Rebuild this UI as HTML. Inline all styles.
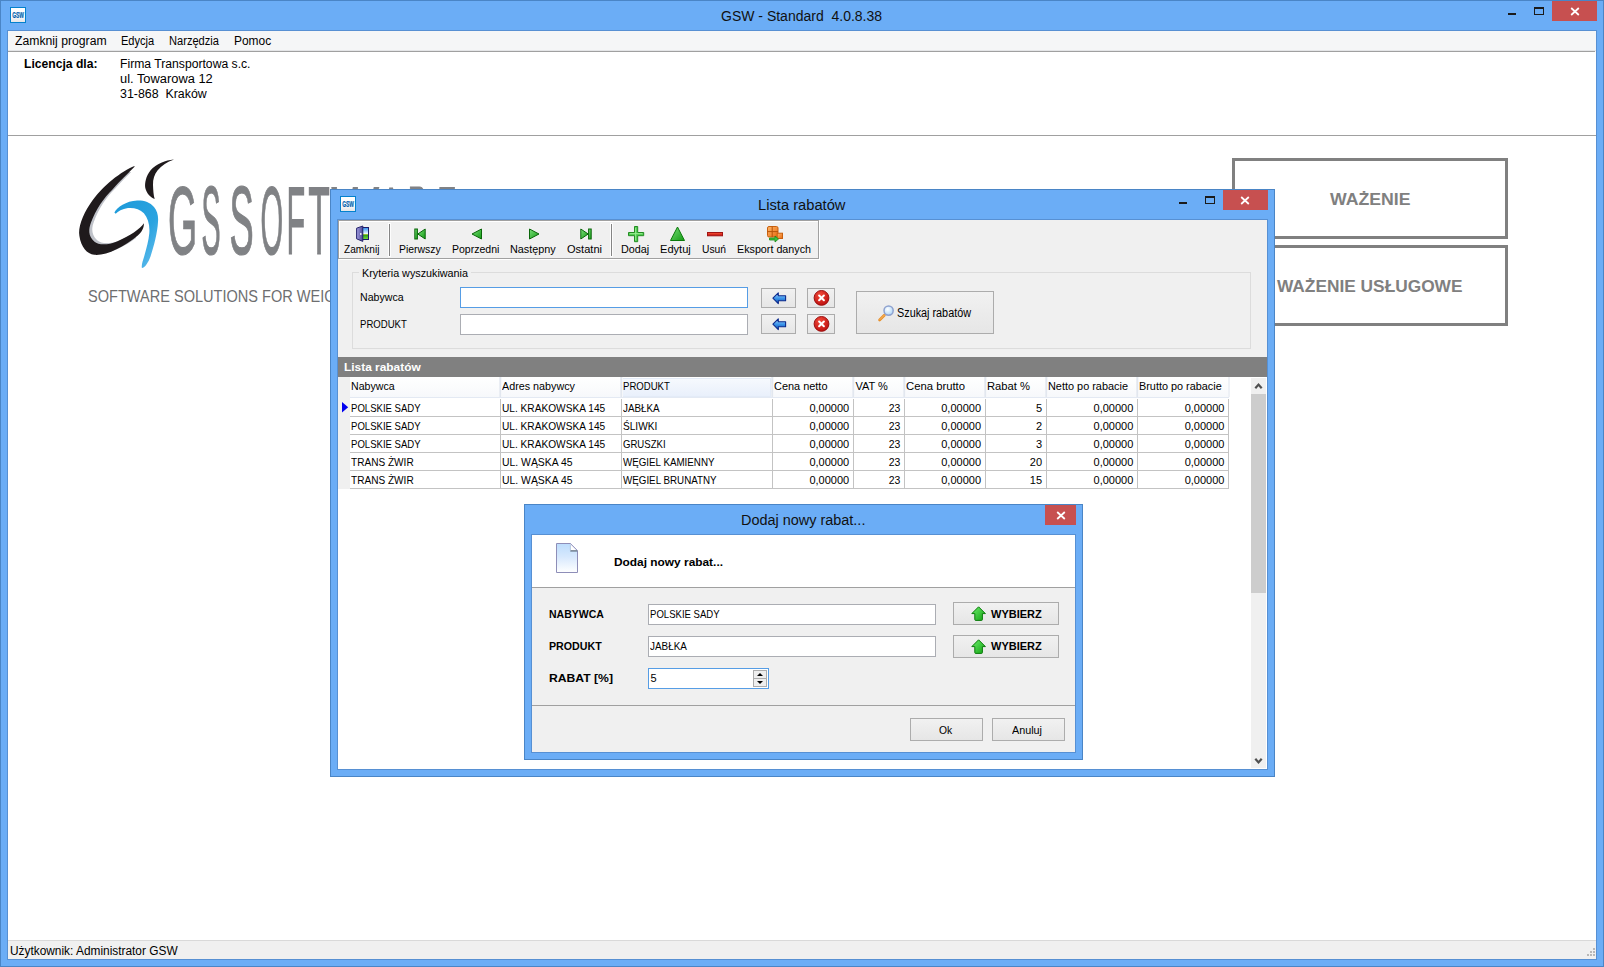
<!DOCTYPE html>
<html lang="pl">
<head>
<meta charset="utf-8">
<title>GSW - Standard 4.0.8.38</title>
<style>
*{box-sizing:border-box;margin:0;padding:0}
html,body{width:1604px;height:967px;overflow:hidden;background:#6badf6}
body{position:relative;font-family:"Liberation Sans",sans-serif;font-size:11px;line-height:11px;color:#000}
.abs{position:absolute;display:block}
.t{position:absolute;white-space:nowrap;transform-origin:0 50%}
svg{overflow:visible}
</style>
</head>
<body>
<div class="abs" style="left:0px;top:0px;width:1604px;height:967px;background:#6badf6;border:1px solid #4a85c6"></div>
<div class="abs" style="left:7px;top:30px;width:1590px;height:930px;background:#5790d3"></div>
<svg class="abs" style="left:10px;top:7px" width="16" height="16" viewBox="0 0 16 16"><defs><linearGradient id="gi10" x1="0" y1="0" x2="0" y2="1"><stop offset="0" stop-color="#ffffff"/><stop offset="0.55" stop-color="#fbfbfb"/><stop offset="1" stop-color="#e4e4e6"/></linearGradient></defs><rect x="0.5" y="0.5" width="15" height="15" fill="url(#gi10)" stroke="#0481cd"/><text x="2.2" y="11" font-family="Liberation Sans, sans-serif" font-weight="bold" font-size="8.4" fill="#005fae" stroke="#005fae" stroke-width="0.2" textLength="11.8" lengthAdjust="spacingAndGlyphs">GSW</text></svg>
<span class="t" style="left:721px;top:9px;font-size:14px;line-height:14px;color:#111">GSW - Standard&nbsp; 4.0.8.38</span>
<div class="abs" style="left:1552px;top:1px;width:45px;height:20px;background:#c75050"></div>
<svg class="abs" style="left:1570px;top:7px" width="10" height="9" viewBox="0 0 10 9"><path d="M1.2 1 L8.8 8 M8.8 1 L1.2 8" stroke="#fff" stroke-width="1.7" fill="none"/></svg>
<div class="abs" style="left:1534px;top:7px;width:10px;height:8px;border:1px solid #1b1b1b;border-top-width:2px"></div>
<div class="abs" style="left:1508px;top:13px;width:8px;height:2px;background:#1b1b1b"></div>
<div class="abs" style="left:8px;top:31px;width:1588px;height:21px;background:#f5f6f7"></div>
<div class="abs" style="left:8px;top:50px;width:1588px;height:1px;background:#e4e5e7"></div>
<div class="abs" style="left:8px;top:51px;width:1587px;height:1px;background:#a0a0a0"></div>
<span class="t" style="left:14.5px;top:35px;font-size:12px;line-height:12px;transform:scaleX(1.0174)">Zamknij program</span>
<span class="t" style="left:121px;top:35px;font-size:12px;line-height:12px;transform:scaleX(0.9214)">Edycja</span>
<span class="t" style="left:169px;top:35px;font-size:12px;line-height:12px;transform:scaleX(0.9254)">Narzędzia</span>
<span class="t" style="left:234px;top:35px;font-size:12px;line-height:12px;transform:scaleX(0.9957)">Pomoc</span>
<div class="abs" style="left:8px;top:52px;width:1588px;height:888px;background:#fff"></div>
<div class="abs" style="left:8px;top:135px;width:1588px;height:1px;background:#a0a0a0"></div>
<span class="t" style="left:24px;top:57px;font-size:13px;line-height:13px;font-weight:bold;transform:scaleX(0.9333)">Licencja dla:</span>
<span class="t" style="left:119.5px;top:58px;font-size:12px;line-height:12px;transform:scaleX(1.0140)">Firma Transportowa s.c.</span>
<span class="t" style="left:119.5px;top:73px;font-size:12px;line-height:12px;transform:scaleX(1.0717)">ul. Towarowa 12</span>
<span class="t" style="left:119.5px;top:88px;font-size:12px;line-height:12px;transform:scaleX(1.0316)">31-868&nbsp; Kraków</span>
<svg class="abs" style="left:70px;top:150px" width="120" height="130" viewBox="0 0 120 130"><defs><linearGradient id="lgb" x1="0" y1="0" x2="1" y2="1"><stop offset="0" stop-color="#1d9ad9"/><stop offset="0.6" stop-color="#2aa3e0"/><stop offset="1" stop-color="#6cc1ee"/></linearGradient></defs><clipPath id="lcp"><rect x="0" y="22" width="66" height="80"/></clipPath><g clip-path="url(#lcp)"><path d="M64.5 16.1 C52 21, 32 36, 20.2 53.8 C12 66, 8 78, 9.4 86 C11 97, 17 104, 24.2 104.8 C36 106, 54 97, 67.2 86 C72 82, 74 78, 73.9 73.3 C70 79, 60 86, 47 91.4 C38 95, 29 95.5, 24.2 91.4 C18 86, 18.5 79, 21 72.6 C25.5 60, 34 47.5, 42.5 39.5 C50 31, 59 22.5, 64.5 16.8 Z" fill="#bfc2c9" transform="translate(3,-1.2)"/></g><path d="M64.5 16.1 C52 21, 32 36, 20.2 53.8 C12 66, 8 78, 9.4 86 C11 97, 17 104, 24.2 104.8 C36 106, 54 97, 67.2 86 C72 82, 74 78, 73.9 73.3 C70 79, 60 86, 47 91.4 C38 95, 29 95.5, 24.2 91.4 C18 86, 18.5 79, 21 72.6 C25.5 60, 34 47.5, 42.5 39.5 C50 31, 59 22.5, 64.5 16.8 Z" fill="#1f1a1c"/><path d="M103.5 9.4 C96 10, 86 14, 80.6 20.2 C76 26, 74.5 33, 75.3 38 C76.5 43, 80 47, 84.7 49.1 C83.5 45.5, 83.2 40, 83 35 C82.8 29, 84.5 24.5, 87.5 20.5 C91.5 15.5, 97.5 11.8, 103.5 9.7 Z" fill="#1f1a1c"/><path d="M44.4 62.5 C47 57, 56 51, 67.2 50.4 C74 50.2, 80 52, 84 57 C87.5 61.5, 88.5 66, 88 72 C87.5 82, 84 96, 80.6 106.2 C78 113, 75 117.5, 71.9 118 C71.5 116, 72 114, 72.6 111.6 C75 104, 78.5 92, 79.3 83.3 C80 75, 78 68, 73.9 63.2 C70 59, 64 57.5, 58 58 C52 58.8, 48 61.5, 45.7 63.8 Z" fill="url(#lgb)"/></svg>
<svg class="abs" style="left:160px;top:180px" width="320" height="85" viewBox="0 0 320 85"><text y="74.4" font-family="Liberation Sans, sans-serif" font-size="97" lengthAdjust="spacingAndGlyphs" fill="#808285" stroke="#808285" stroke-width="1.2" xml:space="preserve"><tspan lengthAdjust="spacingAndGlyphs" x="8.1" textLength="29.2">G</tspan><tspan lengthAdjust="spacingAndGlyphs" x="41.5" textLength="19.1">S</tspan><tspan x="62"> </tspan><tspan lengthAdjust="spacingAndGlyphs" x="69.4" textLength="24.2">S</tspan><tspan lengthAdjust="spacingAndGlyphs" x="100.4" textLength="22.7">O</tspan><tspan lengthAdjust="spacingAndGlyphs" x="126.5" textLength="18.7">F</tspan><tspan lengthAdjust="spacingAndGlyphs" x="148.2" textLength="21.6">T</tspan><tspan lengthAdjust="spacingAndGlyphs" x="171.6" textLength="47.6">W</tspan><tspan lengthAdjust="spacingAndGlyphs" x="219.9" textLength="22.1">A</tspan><tspan lengthAdjust="spacingAndGlyphs" x="247.7" textLength="20.7">R</tspan><tspan lengthAdjust="spacingAndGlyphs" x="277.3" textLength="19.3">E</tspan></text></svg>
<span class="t" style="left:87.5px;top:288px;font-size:16.5px;line-height:16.5px;color:#6d6e70;transform:scaleX(0.8819)">SOFTWARE SOLUTIONS FOR WEIGHING</span>
<div class="abs" style="left:1232px;top:158px;width:276px;height:81px;border:3px solid #808080;background:#fff"></div>
<div class="abs" style="left:1232px;top:245px;width:276px;height:81px;border:3px solid #808080;background:#fff"></div>
<span class="t" style="left:1330px;top:191px;font-size:16px;line-height:16px;font-weight:bold;color:#808080;transform:translateY(0.5px) scaleX(1.1044)">WAŻENIE</span>
<span class="t" style="left:1277px;top:278px;font-size:16px;line-height:16px;font-weight:bold;color:#808080;transform:translateY(0.5px) scaleX(1.0812)">WAŻENIE USŁUGOWE</span>
<div class="abs" style="left:8px;top:940px;width:1588px;height:1px;background:#d9d9d9"></div>
<div class="abs" style="left:8px;top:941px;width:1588px;height:18px;background:#f0f0f0"></div>
<span class="t" style="left:9.5px;top:945px;font-size:12px;line-height:12px;transform:scaleX(0.9895)">Użytkownik: Administrator GSW</span>
<svg class="abs" style="left:1584px;top:947px" width="12" height="12" viewBox="0 0 12 12"><rect x="9" y="1" width="2" height="2" fill="#b8b8b8"/><rect x="6" y="4" width="2" height="2" fill="#b8b8b8"/><rect x="9" y="4" width="2" height="2" fill="#b8b8b8"/><rect x="3" y="7" width="2" height="2" fill="#b8b8b8"/><rect x="6" y="7" width="2" height="2" fill="#b8b8b8"/><rect x="9" y="7" width="2" height="2" fill="#b8b8b8"/></svg>
<div class="abs" style="left:330px;top:189px;width:945px;height:588px;background:#6badf6;border:1px solid #4a85c6"></div>
<div class="abs" style="left:337px;top:219px;width:931px;height:551px;background:#5790d3"></div>
<svg class="abs" style="left:340px;top:196px" width="16" height="16" viewBox="0 0 16 16"><defs><linearGradient id="gi340" x1="0" y1="0" x2="0" y2="1"><stop offset="0" stop-color="#ffffff"/><stop offset="0.55" stop-color="#fbfbfb"/><stop offset="1" stop-color="#e4e4e6"/></linearGradient></defs><rect x="0.5" y="0.5" width="15" height="15" fill="url(#gi340)" stroke="#0481cd"/><text x="2.2" y="11" font-family="Liberation Sans, sans-serif" font-weight="bold" font-size="8.4" fill="#005fae" stroke="#005fae" stroke-width="0.2" textLength="11.8" lengthAdjust="spacingAndGlyphs">GSW</text></svg>
<span class="t" style="left:758px;top:198px;font-size:14px;line-height:14px;color:#111;transform:scaleX(1.0507)">Lista rabatów</span>
<div class="abs" style="left:1223px;top:190px;width:45px;height:20px;background:#c75050"></div>
<svg class="abs" style="left:1240px;top:196px" width="10" height="9" viewBox="0 0 10 9"><path d="M1.2 1 L8.8 8 M8.8 1 L1.2 8" stroke="#fff" stroke-width="1.7" fill="none"/></svg>
<div class="abs" style="left:1205px;top:196px;width:10px;height:8px;border:1px solid #1b1b1b;border-top-width:2px"></div>
<div class="abs" style="left:1179px;top:202px;width:8px;height:2px;background:#1b1b1b"></div>
<div class="abs" style="left:338px;top:220px;width:929px;height:549px;background:#f0f0f0"></div>
<div class="abs" style="left:338px;top:220px;width:481px;height:39px;background:#f0f0f0;border:1px solid #a0a0a0;box-shadow:inset 1px 1px 0 #fff,1px 1px 0 #fff"></div>
<div class="abs" style="left:389px;top:224px;width:1px;height:32px;background:#858585;box-shadow:0 0 0 1px rgba(255,255,255,.85)"></div>
<div class="abs" style="left:611px;top:224px;width:1px;height:32px;background:#858585;box-shadow:0 0 0 1px rgba(255,255,255,.85)"></div>
<svg class="abs" style="left:356px;top:225px" width="14" height="18" viewBox="0 0 14 18"><defs><linearGradient id="sky" x1="0" y1="0" x2="0" y2="1"><stop offset="0" stop-color="#2a8cf0"/><stop offset="0.5" stop-color="#e8f6ff"/><stop offset="0.55" stop-color="#ffe84a"/><stop offset="0.62" stop-color="#2a9a1a"/><stop offset="1" stop-color="#7ae03a"/></linearGradient><linearGradient id="door" x1="0" y1="0" x2="1" y2="0"><stop offset="0" stop-color="#a29ee0"/><stop offset="1" stop-color="#4c4896"/></linearGradient></defs><rect x="6" y="2.5" width="6.5" height="12" fill="url(#sky)" stroke="#1c1c6a" stroke-width="1"/><path d="M0.6 3.2 L6.8 1 L6.8 16.4 L0.6 13.8 Z" fill="url(#door)" stroke="#26246e" stroke-width="1" stroke-linejoin="round"/><rect x="4.2" y="8" width="1.2" height="2" fill="#fff"/></svg>
<svg class="abs" style="left:414px;top:228px" width="12" height="12" viewBox="0 0 12 12"><defs><linearGradient id="gg" x1="0" y1="0" x2="1" y2="1"><stop offset="0" stop-color="#7be07b"/><stop offset="1" stop-color="#129a12"/></linearGradient></defs><rect x="0.8" y="1" width="2.6" height="10" fill="url(#gg)" stroke="#0a660a" stroke-width="1" stroke-linejoin="miter"/><path d="M11.2 1 L11.2 11 L3.8 6 Z" fill="url(#gg)" stroke="#0a660a" stroke-width="1" stroke-linejoin="miter"/></svg>
<svg class="abs" style="left:471px;top:228px" width="12" height="12" viewBox="0 0 12 12"><defs><linearGradient id="gg" x1="0" y1="0" x2="1" y2="1"><stop offset="0" stop-color="#7be07b"/><stop offset="1" stop-color="#129a12"/></linearGradient></defs><path d="M10.5 1 L10.5 11 L1 6 Z" fill="url(#gg)" stroke="#0a660a" stroke-width="1" stroke-linejoin="miter"/></svg>
<svg class="abs" style="left:528px;top:228px" width="12" height="12" viewBox="0 0 12 12"><defs><linearGradient id="gg" x1="0" y1="0" x2="1" y2="1"><stop offset="0" stop-color="#7be07b"/><stop offset="1" stop-color="#129a12"/></linearGradient></defs><path d="M1.5 1 L1.5 11 L11 6 Z" fill="url(#gg)" stroke="#0a660a" stroke-width="1" stroke-linejoin="miter"/></svg>
<svg class="abs" style="left:580px;top:228px" width="12" height="12" viewBox="0 0 12 12"><defs><linearGradient id="gg" x1="0" y1="0" x2="1" y2="1"><stop offset="0" stop-color="#7be07b"/><stop offset="1" stop-color="#129a12"/></linearGradient></defs><rect x="8.6" y="1" width="2.6" height="10" fill="url(#gg)" stroke="#0a660a" stroke-width="1" stroke-linejoin="miter"/><path d="M0.8 1 L0.8 11 L8.2 6 Z" fill="url(#gg)" stroke="#0a660a" stroke-width="1" stroke-linejoin="miter"/></svg>
<svg class="abs" style="left:628px;top:226px" width="16" height="16" viewBox="0 0 16 16"><path d="M6.5 0.5 H9.7 V6.5 H15.7 V9.7 H9.7 V15.7 H6.5 V9.7 H0.5 V6.5 H6.5 Z" fill="#52cc52" stroke="#238c23" stroke-width="1"/><path d="M7.6 1.8 V14.4 M1.8 7.6 H14.4" stroke="#9aec94" stroke-width="0.9"/></svg>
<svg class="abs" style="left:669.5px;top:226px" width="15" height="16" viewBox="0 0 15 16"><defs><linearGradient id="gg" x1="0" y1="0" x2="1" y2="1"><stop offset="0" stop-color="#7be07b"/><stop offset="1" stop-color="#129a12"/></linearGradient></defs><path d="M7.5 1 L14.5 14.5 L0.5 14.5 Z" fill="url(#gg)" stroke="#0b7a0b" stroke-width="1" stroke-linejoin="round"/></svg>
<svg class="abs" style="left:707px;top:231.5px" width="16" height="5" viewBox="0 0 16 5"><defs><linearGradient id="rm" x1="0" y1="0" x2="0" y2="1"><stop offset="0" stop-color="#ff5a3c"/><stop offset="1" stop-color="#b80808"/></linearGradient></defs><rect x="0.5" y="0.5" width="15" height="3.3" fill="url(#rm)" stroke="#a01414" stroke-width="1"/></svg>
<svg class="abs" style="left:767px;top:226px" width="16" height="17" viewBox="0 0 16 17"><defs><linearGradient id="og" x1="0" y1="0" x2="1" y2="1"><stop offset="0" stop-color="#ffb86a"/><stop offset="1" stop-color="#e86a10"/></linearGradient></defs><rect x="0.5" y="0.5" width="10.5" height="10.5" rx="1.5" fill="url(#og)" stroke="#c8600e"/><path d="M5.2 0.5 V11 M0.5 5.6 H11" stroke="#b4520a" stroke-width="1"/><rect x="10.2" y="7.2" width="5.3" height="5.3" fill="url(#og)" stroke="#c8600e"/><path d="M2.5 12 H8 V10 L11.5 13 L8 16 V14 H2.5 Z" fill="#3cc03c" stroke="#178a17" stroke-width="0.8"/></svg>
<span class="t" style="left:344px;top:244px;transform:scaleX(0.9191)">Zamknij</span>
<span class="t" style="left:399px;top:244px;transform:scaleX(0.9497)">Pierwszy</span>
<span class="t" style="left:452px;top:244px;transform:scaleX(0.9567)">Poprzedni</span>
<span class="t" style="left:510px;top:244px;transform:scaleX(0.9853)">Następny</span>
<span class="t" style="left:567px;top:244px;transform:scaleX(1.0040)">Ostatni</span>
<span class="t" style="left:621px;top:244px;transform:scaleX(0.9809)">Dodaj</span>
<span class="t" style="left:660px;top:244px;transform:scaleX(1.0073)">Edytuj</span>
<span class="t" style="left:702px;top:244px;transform:scaleX(0.9343)">Usuń</span>
<span class="t" style="left:737px;top:244px;transform:scaleX(0.9759)">Eksport danych</span>
<div class="abs" style="left:352px;top:272px;width:899px;height:77px;border:1px solid #dcdcdc"></div>
<div class="abs" style="left:359px;top:266px;width:112px;height:14px;background:#f0f0f0"></div>
<span class="t" style="left:362px;top:268px;transform:scaleX(0.9796)">Kryteria wyszukiwania</span>
<span class="t" style="left:360px;top:292px;transform:scaleX(0.9635)">Nabywca</span>
<span class="t" style="left:360px;top:319px;transform:scaleX(0.8702)">PRODUKT</span>
<div class="abs" style="left:460px;top:287px;width:288px;height:21px;background:#fff;border:1px solid #569de5"></div>
<div class="abs" style="left:460px;top:314px;width:288px;height:21px;background:#fff;border:1px solid #abadb3"></div>
<div class="abs" style="left:761px;top:288px;width:35px;height:20px;border:1px solid #acacac;background:linear-gradient(#f1f1f1,#e6e6e6)"></div>
<div class="abs" style="left:807px;top:288px;width:28px;height:20px;border:1px solid #acacac;background:linear-gradient(#f1f1f1,#e6e6e6)"></div>
<svg class="abs" style="left:771.5px;top:291.7px" width="15" height="13" viewBox="0 0 15 13"><defs><linearGradient id="ba" x1="0" y1="0" x2="0" y2="1"><stop offset="0" stop-color="#b4dcff"/><stop offset="0.5" stop-color="#3c96ea"/><stop offset="1" stop-color="#0a50b8"/></linearGradient></defs><path d="M0.9 6.2 L6.3 0.8 V3.7 H13.6 V8.7 H6.3 V11.6 Z" fill="url(#ba)" stroke="#0c2a8c" stroke-width="1.1" stroke-linejoin="round"/></svg>
<svg class="abs" style="left:812.6px;top:289.4px" width="17" height="17" viewBox="0 0 17 17"><defs><radialGradient id="rx" cx="0.4" cy="0.3" r="0.8"><stop offset="0" stop-color="#f24a3a"/><stop offset="1" stop-color="#b80a0a"/></radialGradient></defs><circle cx="8.5" cy="8.9" r="7.4" fill="url(#rx)" stroke="#9a1010" stroke-width="1"/><path d="M6.1 6.5 L10.9 11.3 M10.9 6.5 L6.1 11.3" stroke="#fff" stroke-width="2" stroke-linecap="round"/></svg>
<div class="abs" style="left:761px;top:314px;width:35px;height:20px;border:1px solid #acacac;background:linear-gradient(#f1f1f1,#e6e6e6)"></div>
<div class="abs" style="left:807px;top:314px;width:28px;height:20px;border:1px solid #acacac;background:linear-gradient(#f1f1f1,#e6e6e6)"></div>
<svg class="abs" style="left:771.5px;top:317.7px" width="15" height="13" viewBox="0 0 15 13"><defs><linearGradient id="ba" x1="0" y1="0" x2="0" y2="1"><stop offset="0" stop-color="#b4dcff"/><stop offset="0.5" stop-color="#3c96ea"/><stop offset="1" stop-color="#0a50b8"/></linearGradient></defs><path d="M0.9 6.2 L6.3 0.8 V3.7 H13.6 V8.7 H6.3 V11.6 Z" fill="url(#ba)" stroke="#0c2a8c" stroke-width="1.1" stroke-linejoin="round"/></svg>
<svg class="abs" style="left:812.6px;top:315.4px" width="17" height="17" viewBox="0 0 17 17"><defs><radialGradient id="rx" cx="0.4" cy="0.3" r="0.8"><stop offset="0" stop-color="#f24a3a"/><stop offset="1" stop-color="#b80a0a"/></radialGradient></defs><circle cx="8.5" cy="8.9" r="7.4" fill="url(#rx)" stroke="#9a1010" stroke-width="1"/><path d="M6.1 6.5 L10.9 11.3 M10.9 6.5 L6.1 11.3" stroke="#fff" stroke-width="2" stroke-linecap="round"/></svg>
<div class="abs" style="left:856px;top:291px;width:138px;height:43px;border:1px solid #acacac;background:linear-gradient(#f1f1f1,#e6e6e6)"></div>
<svg class="abs" style="left:877.8px;top:304.7px" width="17" height="17" viewBox="0 0 17 17"><defs><radialGradient id="mg" cx="0.4" cy="0.35" r="0.7"><stop offset="0" stop-color="#ffffff"/><stop offset="1" stop-color="#a8d4f8"/></radialGradient></defs><path d="M6.3 10.2 L1.6 14.9" stroke="#e8902a" stroke-width="2.8" stroke-linecap="round"/><path d="M6.6 9.9 L2 14.5" stroke="#f8c070" stroke-width="0.9" stroke-linecap="round"/><circle cx="10.6" cy="5.6" r="4.6" fill="url(#mg)" stroke="#8fa2cf" stroke-width="1.5"/></svg>
<span class="t" style="left:897px;top:307px;font-size:12px;line-height:12px;transform:scaleX(0.9019)">Szukaj rabatów</span>
<div class="abs" style="left:338px;top:357px;width:929px;height:20px;background:#808080"></div>
<span class="t" style="left:344px;top:362px;font-weight:bold;color:#fff;transform:scaleX(1.0817)">Lista rabatów</span>
<div class="abs" style="left:338px;top:377px;width:912px;height:392px;background:#fff"></div>
<div class="abs" style="left:338px;top:377px;width:12px;height:112px;background:#f0f0f0"></div>
<div class="abs" style="left:350px;top:377px;width:879px;height:21px;background:linear-gradient(#ffffff,#fbfcfd 50%,#f6f8fb);border-bottom:1px solid #e3e9f3"></div>
<div class="abs" style="left:622px;top:378px;width:149px;height:19px;background:linear-gradient(#f6f9fe,#e9f0fb);border:1px solid #e3ebf7"></div>
<span class="t" style="left:351px;top:381px;transform:scaleX(0.9635)">Nabywca</span>
<div class="abs" style="left:499px;top:377px;width:3px;height:20px;background:linear-gradient(90deg,#eef1f6,#e2e7ef 50%,#ffffff)"></div>
<span class="t" style="left:502.4px;top:381px;transform:scaleX(0.9786)">Adres nabywcy</span>
<div class="abs" style="left:620px;top:377px;width:3px;height:20px;background:linear-gradient(90deg,#eef1f6,#e2e7ef 50%,#ffffff)"></div>
<span class="t" style="left:623.4px;top:381px;transform:scaleX(0.8702)">PRODUKT</span>
<div class="abs" style="left:771px;top:377px;width:3px;height:20px;background:linear-gradient(90deg,#eef1f6,#e2e7ef 50%,#ffffff)"></div>
<span class="t" style="left:774.4px;top:381px;transform:scaleX(0.9939)">Cena netto</span>
<div class="abs" style="left:852px;top:377px;width:3px;height:20px;background:linear-gradient(90deg,#eef1f6,#e2e7ef 50%,#ffffff)"></div>
<span class="t" style="left:855.4px;top:381px">VAT %</span>
<div class="abs" style="left:903px;top:377px;width:3px;height:20px;background:linear-gradient(90deg,#eef1f6,#e2e7ef 50%,#ffffff)"></div>
<span class="t" style="left:906.4px;top:381px;transform:scaleX(1.0264)">Cena brutto</span>
<div class="abs" style="left:984px;top:377px;width:3px;height:20px;background:linear-gradient(90deg,#eef1f6,#e2e7ef 50%,#ffffff)"></div>
<span class="t" style="left:987.4px;top:381px;transform:scaleX(1.0189)">Rabat %</span>
<div class="abs" style="left:1045px;top:377px;width:3px;height:20px;background:linear-gradient(90deg,#eef1f6,#e2e7ef 50%,#ffffff)"></div>
<span class="t" style="left:1048.4px;top:381px;transform:scaleX(0.9911)">Netto po rabacie</span>
<div class="abs" style="left:1136px;top:377px;width:3px;height:20px;background:linear-gradient(90deg,#eef1f6,#e2e7ef 50%,#ffffff)"></div>
<span class="t" style="left:1139.4px;top:381px;transform:scaleX(0.9871)">Brutto po rabacie</span>
<div class="abs" style="left:1228px;top:377px;width:2px;height:20px;background:#eef1f6"></div>
<div class="abs" style="left:350px;top:416px;width:879px;height:1px;background:#c3c3c3"></div>
<span class="t" style="left:351px;top:403px;transform:scaleX(0.8690)">POLSKIE SADY</span>
<span class="t" style="left:502px;top:403px;transform:scaleX(0.9223)">UL. KRAKOWSKA 145</span>
<span class="t" style="left:623px;top:403px;transform:scaleX(0.8934)">JABŁKA</span>
<span class="t" style="right:754.8px;top:403px">0,00000</span>
<span class="t" style="right:703.4px;top:403px;transform:scaleX(0.9469);transform-origin:100% 50%">23</span>
<span class="t" style="right:623px;top:403px">0,00000</span>
<span class="t" style="right:561.9000000000001px;top:403px">5</span>
<span class="t" style="right:470.70000000000005px;top:403px">0,00000</span>
<span class="t" style="right:379.5999999999999px;top:403px">0,00000</span>
<div class="abs" style="left:350px;top:434px;width:879px;height:1px;background:#c3c3c3"></div>
<span class="t" style="left:351px;top:421px;transform:scaleX(0.8690)">POLSKIE SADY</span>
<span class="t" style="left:502px;top:421px;transform:scaleX(0.9223)">UL. KRAKOWSKA 145</span>
<span class="t" style="left:623px;top:421px;transform:scaleX(0.9196)">ŚLIWKI</span>
<span class="t" style="right:754.8px;top:421px">0,00000</span>
<span class="t" style="right:703.4px;top:421px;transform:scaleX(0.9469);transform-origin:100% 50%">23</span>
<span class="t" style="right:623px;top:421px">0,00000</span>
<span class="t" style="right:561.9000000000001px;top:421px">2</span>
<span class="t" style="right:470.70000000000005px;top:421px">0,00000</span>
<span class="t" style="right:379.5999999999999px;top:421px">0,00000</span>
<div class="abs" style="left:350px;top:452px;width:879px;height:1px;background:#c3c3c3"></div>
<span class="t" style="left:351px;top:439px;transform:scaleX(0.8690)">POLSKIE SADY</span>
<span class="t" style="left:502px;top:439px;transform:scaleX(0.9223)">UL. KRAKOWSKA 145</span>
<span class="t" style="left:623px;top:439px;transform:scaleX(0.8711)">GRUSZKI</span>
<span class="t" style="right:754.8px;top:439px">0,00000</span>
<span class="t" style="right:703.4px;top:439px;transform:scaleX(0.9469);transform-origin:100% 50%">23</span>
<span class="t" style="right:623px;top:439px">0,00000</span>
<span class="t" style="right:561.9000000000001px;top:439px">3</span>
<span class="t" style="right:470.70000000000005px;top:439px">0,00000</span>
<span class="t" style="right:379.5999999999999px;top:439px">0,00000</span>
<div class="abs" style="left:350px;top:470px;width:879px;height:1px;background:#c3c3c3"></div>
<span class="t" style="left:351px;top:457px;transform:scaleX(0.9160)">TRANS ŻWIR</span>
<span class="t" style="left:502px;top:457px;transform:scaleX(0.9451)">UL. WĄSKA 45</span>
<span class="t" style="left:623px;top:457px;transform:scaleX(0.8893)">WĘGIEL KAMIENNY</span>
<span class="t" style="right:754.8px;top:457px">0,00000</span>
<span class="t" style="right:703.4px;top:457px;transform:scaleX(0.9469);transform-origin:100% 50%">23</span>
<span class="t" style="right:623px;top:457px">0,00000</span>
<span class="t" style="right:561.9000000000001px;top:457px">20</span>
<span class="t" style="right:470.70000000000005px;top:457px">0,00000</span>
<span class="t" style="right:379.5999999999999px;top:457px">0,00000</span>
<div class="abs" style="left:350px;top:488px;width:879px;height:1px;background:#c3c3c3"></div>
<span class="t" style="left:351px;top:475px;transform:scaleX(0.9160)">TRANS ŻWIR</span>
<span class="t" style="left:502px;top:475px;transform:scaleX(0.9451)">UL. WĄSKA 45</span>
<span class="t" style="left:623px;top:475px;transform:scaleX(0.8904)">WĘGIEL BRUNATNY</span>
<span class="t" style="right:754.8px;top:475px">0,00000</span>
<span class="t" style="right:703.4px;top:475px;transform:scaleX(0.9469);transform-origin:100% 50%">23</span>
<span class="t" style="right:623px;top:475px">0,00000</span>
<span class="t" style="right:561.9000000000001px;top:475px">15</span>
<span class="t" style="right:470.70000000000005px;top:475px">0,00000</span>
<span class="t" style="right:379.5999999999999px;top:475px">0,00000</span>
<div class="abs" style="left:500px;top:399px;width:1px;height:90px;background:#c3c3c3"></div>
<div class="abs" style="left:621px;top:399px;width:1px;height:90px;background:#c3c3c3"></div>
<div class="abs" style="left:772px;top:399px;width:1px;height:90px;background:#c3c3c3"></div>
<div class="abs" style="left:853px;top:399px;width:1px;height:90px;background:#c3c3c3"></div>
<div class="abs" style="left:904px;top:399px;width:1px;height:90px;background:#c3c3c3"></div>
<div class="abs" style="left:985px;top:399px;width:1px;height:90px;background:#c3c3c3"></div>
<div class="abs" style="left:1046px;top:399px;width:1px;height:90px;background:#c3c3c3"></div>
<div class="abs" style="left:1137px;top:399px;width:1px;height:90px;background:#c3c3c3"></div>
<div class="abs" style="left:1228px;top:399px;width:1px;height:90px;background:#c3c3c3"></div>
<svg class="abs" style="left:342px;top:402px" width="7" height="11" viewBox="0 0 7 11"><path d="M0 0 L6.2 5.2 L0 10.4 Z" fill="#0000f0"/></svg>
<div class="abs" style="left:1250px;top:377px;width:17px;height:392px;background:#fff"></div>
<div class="abs" style="left:1251px;top:378px;width:15px;height:390px;background:#f0f0f0"></div>
<div class="abs" style="left:1251px;top:394px;width:15px;height:199px;background:#cdcdcd"></div>
<svg class="abs" style="left:1254px;top:382px" width="9" height="8" viewBox="0 0 9 8"><path d="M1.3 6.2 L4.5 2.6 L7.7 6.2" stroke="#505050" stroke-width="2.2" fill="none"/></svg>
<svg class="abs" style="left:1254px;top:757px" width="9" height="8" viewBox="0 0 9 8"><path d="M1.3 1.8 L4.5 5.4 L7.7 1.8" stroke="#505050" stroke-width="2.2" fill="none"/></svg>
<div class="abs" style="left:524px;top:504px;width:559px;height:256px;background:#6badf6;border:1px solid #4a85c6"></div>
<div class="abs" style="left:531px;top:534px;width:545px;height:219px;background:#5790d3"></div>
<span class="t" style="left:741px;top:513px;font-size:14px;line-height:14px;color:#111;transform:scaleX(1.0313)">Dodaj nowy rabat...</span>
<div class="abs" style="left:1045px;top:505px;width:31px;height:20px;background:#c75050"></div>
<svg class="abs" style="left:1056px;top:511px" width="10" height="9" viewBox="0 0 10 9"><path d="M1.2 1 L8.8 8 M8.8 1 L1.2 8" stroke="#fff" stroke-width="1.7" fill="none"/></svg>
<div class="abs" style="left:532px;top:535px;width:543px;height:217px;background:#f0f0f0"></div>
<div class="abs" style="left:532px;top:535px;width:543px;height:52px;background:#fff"></div>
<div class="abs" style="left:532px;top:587px;width:543px;height:1px;background:#a0a0a0"></div>
<div class="abs" style="left:532px;top:705px;width:543px;height:1px;background:#a0a0a0"></div>
<svg class="abs" style="left:556px;top:543px" width="22" height="30" viewBox="0 0 22 30"><defs><linearGradient id="dg" x1="0" y1="0" x2="0" y2="1"><stop offset="0" stop-color="#bcdcfc"/><stop offset="0.45" stop-color="#d6e8fd"/><stop offset="1" stop-color="#ffffff"/></linearGradient></defs><path d="M0.5 0.5 H14.3 L21.5 7.7 V29.5 H0.5 Z" fill="url(#dg)" stroke="#8e8eb8" stroke-width="1"/><path d="M14.3 0.8 V7.7 H21.2 Z" fill="#fff"/><path d="M14.3 0.5 L21.5 7.7" stroke="#9a9ac4" stroke-width="1" fill="none"/><path d="M14.3 7.9 H21.2" stroke="#5e6e7e" stroke-width="1.3"/><path d="M14.4 1.5 V7.5" stroke="#a8bcd8" stroke-width="0.8"/></svg>
<span class="t" style="left:614px;top:557px;font-weight:bold;transform:scaleX(1.0807)">Dodaj nowy rabat...</span>
<span class="t" style="left:548.5px;top:609px;font-weight:bold;transform:scaleX(0.9538)">NABYWCA</span>
<span class="t" style="left:548.5px;top:641px;font-weight:bold;transform:scaleX(0.9689)">PRODUKT</span>
<span class="t" style="left:548.5px;top:673px;font-weight:bold;transform:scaleX(1.1064)">RABAT [%]</span>
<div class="abs" style="left:648px;top:604px;width:288px;height:21px;background:#fff;border:1px solid #abadb3"></div>
<div class="abs" style="left:648px;top:636px;width:288px;height:21px;background:#fff;border:1px solid #abadb3"></div>
<div class="abs" style="left:648px;top:668px;width:121px;height:21px;background:#fff;border:1px solid #569de5"></div>
<span class="t" style="left:650px;top:609px;transform:scaleX(0.8690)">POLSKIE SADY</span>
<span class="t" style="left:650px;top:641px;transform:scaleX(0.9007)">JABŁKA</span>
<span class="t" style="left:650.5px;top:673px">5</span>
<div class="abs" style="left:753px;top:670px;width:14px;height:9px;border:1px solid #acacac;background:#eee"></div>
<div class="abs" style="left:753px;top:678px;width:14px;height:9px;border:1px solid #acacac;background:#eee"></div>
<svg class="abs" style="left:757px;top:673px" width="6" height="3" viewBox="0 0 6 3"><path d="M0 3 L3 0 L6 3 Z" fill="#000"/></svg>
<svg class="abs" style="left:757px;top:681px" width="6" height="3" viewBox="0 0 6 3"><path d="M0 0 L3 3 L6 0 Z" fill="#000"/></svg>
<div class="abs" style="left:953px;top:602px;width:106px;height:23px;border:1px solid #acacac;background:linear-gradient(#f1f1f1,#e6e6e6)"></div>
<svg class="abs" style="left:971.3px;top:606.3px" width="16" height="16" viewBox="0 0 16 16"><defs><linearGradient id="ug" x1="0" y1="0" x2="1" y2="1"><stop offset="0" stop-color="#6cf06c"/><stop offset="1" stop-color="#12a012"/></linearGradient></defs><path d="M7.6 0.8 L14.4 7.6 H11.4 V13.6 Q11.4 14.4 10.6 14.4 H4.6 Q3.8 14.4 3.8 13.6 V7.6 H0.8 Z" fill="url(#ug)" stroke="#0b7a0b" stroke-width="1" stroke-linejoin="round"/></svg>
<span class="t" style="left:991px;top:609px;font-weight:bold">WYBIERZ</span>
<div class="abs" style="left:953px;top:635px;width:106px;height:23px;border:1px solid #acacac;background:linear-gradient(#f1f1f1,#e6e6e6)"></div>
<svg class="abs" style="left:971.3px;top:639.3px" width="16" height="16" viewBox="0 0 16 16"><defs><linearGradient id="ug" x1="0" y1="0" x2="1" y2="1"><stop offset="0" stop-color="#6cf06c"/><stop offset="1" stop-color="#12a012"/></linearGradient></defs><path d="M7.6 0.8 L14.4 7.6 H11.4 V13.6 Q11.4 14.4 10.6 14.4 H4.6 Q3.8 14.4 3.8 13.6 V7.6 H0.8 Z" fill="url(#ug)" stroke="#0b7a0b" stroke-width="1" stroke-linejoin="round"/></svg>
<span class="t" style="left:991px;top:641px;font-weight:bold">WYBIERZ</span>
<div class="abs" style="left:910px;top:718px;width:73px;height:23px;border:1px solid #acacac;background:linear-gradient(#f1f1f1,#e6e6e6)"></div>
<div class="abs" style="left:992px;top:718px;width:73px;height:23px;border:1px solid #acacac;background:linear-gradient(#f1f1f1,#e6e6e6)"></div>
<span class="t" style="left:939px;top:725px;transform:scaleX(0.9387)">Ok</span>
<span class="t" style="left:1012.3px;top:725px;transform:scaleX(0.9811)">Anuluj</span>
</body>
</html>
